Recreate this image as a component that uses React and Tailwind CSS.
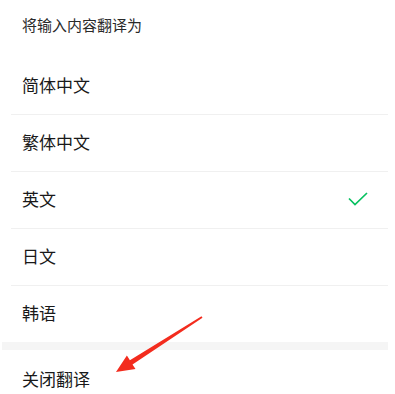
import React from "react";

const font = { fontFamily: '"Noto Sans CJK SC", "Noto Sans", sans-serif' };

function Row({ label, checked, last }) {
  return (
    <div className="flex flex-col">
      <div className="flex h-[56px] items-center justify-between pb-[4px] pl-[22px] pr-[27px]">
        <span className="text-[17px] leading-none text-[#191919]">{label}</span>
        {checked && (
          <svg width="20" height="14" viewBox="0 0 20 14" fill="none" className="translate-y-[1px]">
            <path d="M1 6.5 L7 12.5 L19 1" stroke="#07c160" strokeWidth="1.7" strokeLinecap="butt" strokeLinejoin="miter" />
          </svg>
        )}
      </div>
      {!last && <div className="ml-[11px] mr-[7px] h-px bg-[#f0f0f0]" />}
    </div>
  );
}

export default function App() {
  const items = ["简体中文", "繁体中文", "英文", "日文", "韩语"];
  return (
    <div className="relative h-[394px] w-[395px] overflow-hidden bg-white" style={font}>
      <div className="flex h-[58px] items-start pl-[22px] pt-[15px]">
        <span className="text-[15px] leading-[20px] text-[#2a2a2a]">将输入内容翻译为</span>
      </div>
      {items.map((t, i) => (
        <Row key={t} label={t} checked={t === "英文"} last={i === items.length - 1} />
      ))}
      <div className="ml-[2px] mr-[7px] h-[8px] bg-[#f5f5f5]" />
      <div className="flex h-[64px] items-center pb-[7px] pl-[22px]">
        <span className="text-[17px] leading-none text-[#191919]">关闭翻译</span>
      </div>
      <svg className="absolute left-0 top-0" width="395" height="394" viewBox="0 0 395 394">
        <polygon
          points="116,372 126.9,355.6 129.9,360.2 201.5,316.2 202.5,317.8 132.5,364.4 135.5,369"
          fill="#f32c1e"
        />
      </svg>
    </div>
  );
}
